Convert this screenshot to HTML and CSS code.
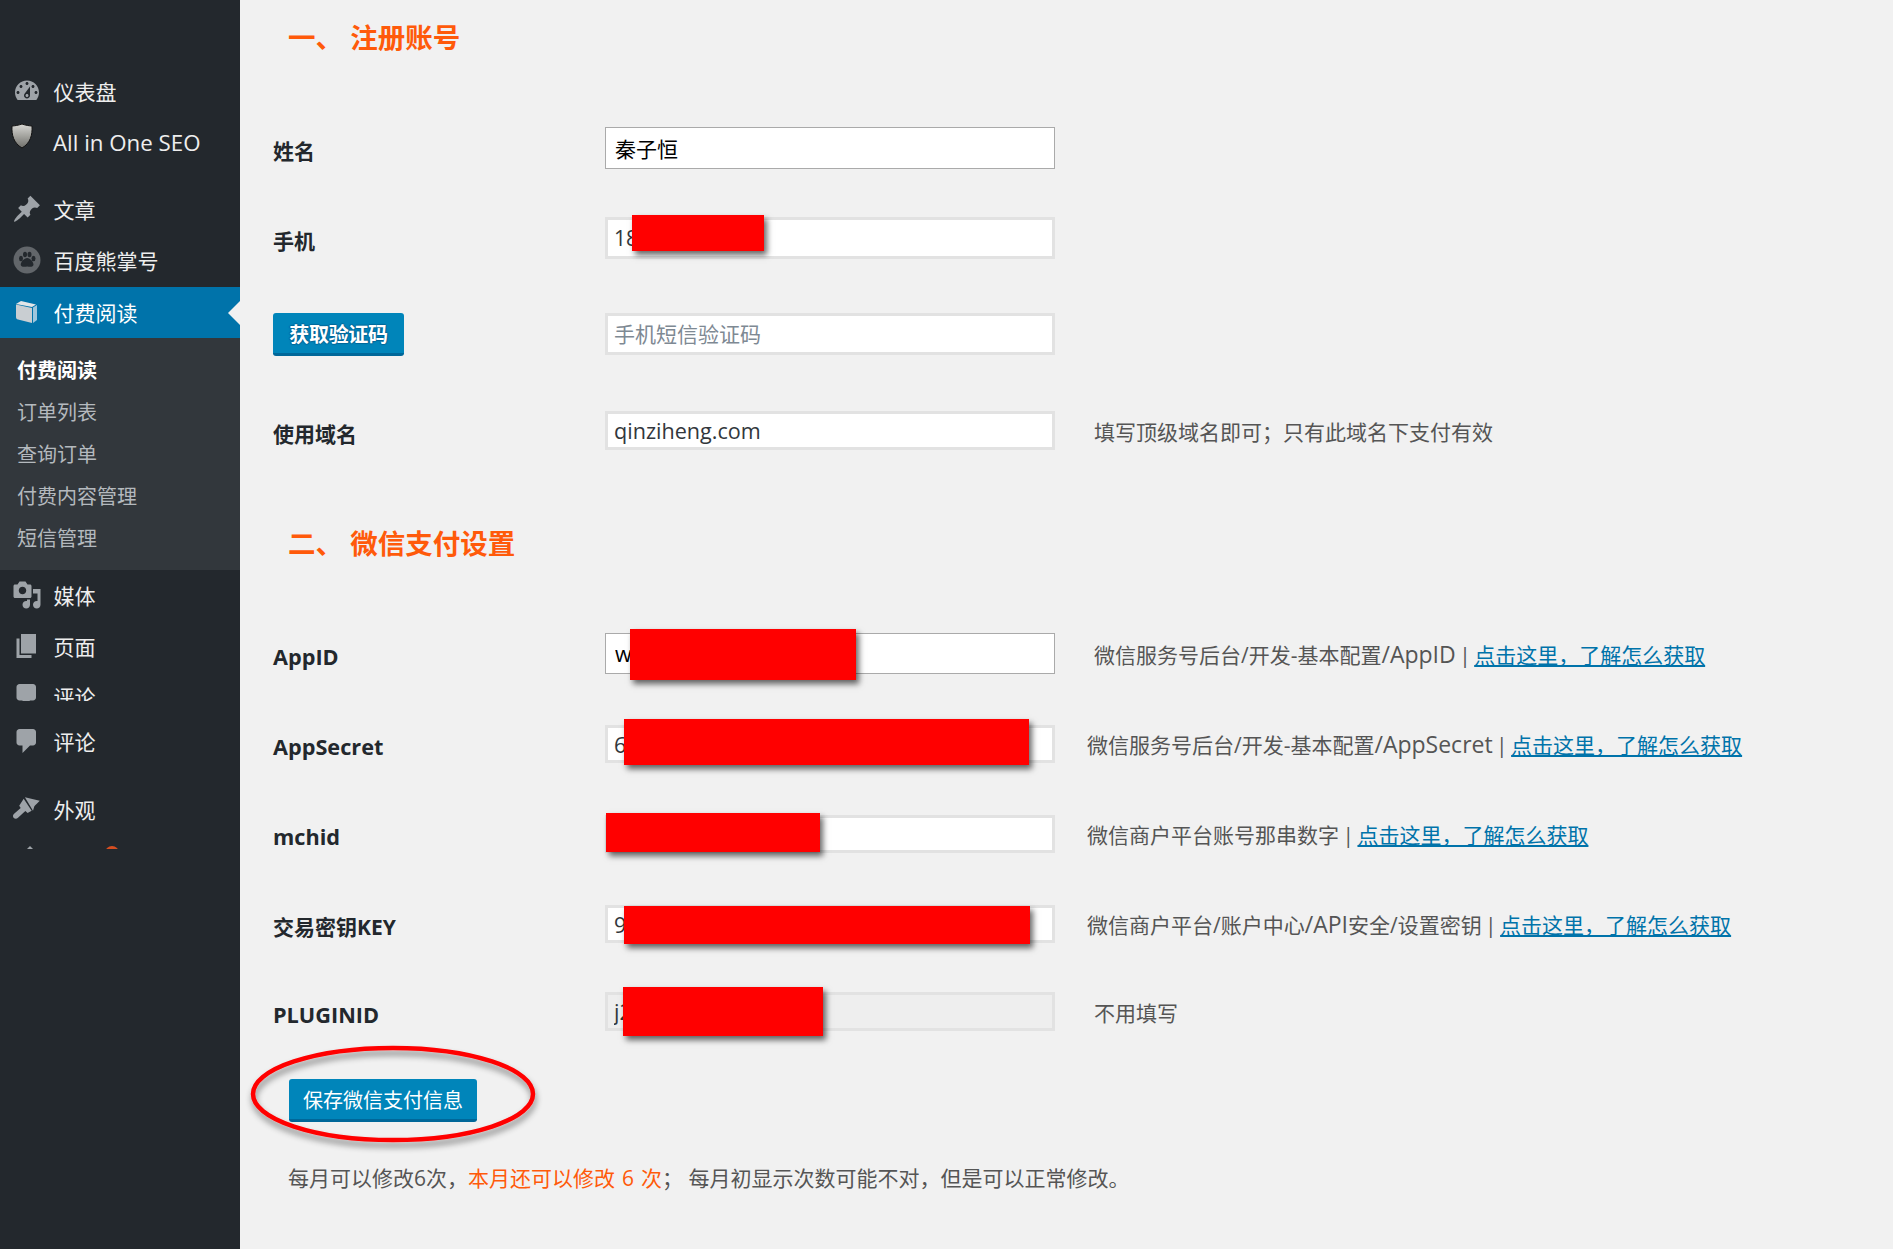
FILE: index.html
```html
<!DOCTYPE html>
<html lang="zh-CN">
<head>
<meta charset="utf-8">
<title>付费阅读</title>
<link rel="stylesheet" href="styles.css">
</head>
<body>
<div class="layout">
  <nav class="sidebar">
    <div class="menu-item">
      <svg class="icon" viewBox="0 0 20 20"><path d="M3.76 16h12.48c1.1-1.37 1.76-3.11 1.76-5 0-4.42-3.58-8-8-8s-8 3.58-8 8c0 1.89.66 3.63 1.76 5zM10 4c.55 0 1 .45 1 1s-.45 1-1 1-1-.45-1-1 .45-1 1-1zM6 6c.55 0 1 .45 1 1s-.45 1-1 1-1-.45-1-1 .45-1 1-1zm8 0c.55 0 1 .45 1 1s-.45 1-1 1-1-.45-1-1 .45-1 1-1zm-5.37 5.55L12 7v6c0 1.1-.9 2-2 2s-2-.9-2-2c0-.57.24-1.08.63-1.45zM4 10c.55 0 1 .45 1 1s-.45 1-1 1-1-.45-1-1 .45-1 1-1zm12 0c.55 0 1 .45 1 1s-.45 1-1 1-1-.45-1-1 .45-1 1-1zm-5 3c0-.55-.45-1-1-1s-1 .45-1 1 .45 1 1 1 1-.45 1-1z"/></svg>
      <span>仪表盘</span>
    </div>
    <div class="menu-item">
      <svg class="icon icon-shield" viewBox="0 0 24 26"><defs><linearGradient id="sh" x1="0" y1="0" x2="0" y2="1"><stop offset="0" stop-color="#d8d8d4"/><stop offset="1" stop-color="#6f6f6a"/></linearGradient></defs><path d="M12 1C8 2.400 5 2.800 2 3c-.5 9 1.500 17 10 22 8.500-5 10.500-13 10-22-3-.2-6-.6-10-2z" fill="url(#sh)" stroke="#111" stroke-width="1"/></svg>
      <span class="menu-latin">All in One SEO</span>
    </div>
    <div class="menu-sep"></div>
    <div class="menu-item">
      <svg class="icon" viewBox="0 0 20 20"><path d="M10.44 3.020l1.820-1.820 6.360 6.350-1.830 1.820c-1.050-.68-2.480-.57-3.410.36l-.75.75c-.92.93-1.040 2.350-.35 3.410l-1.830 1.820-2.410-2.410-2.800 2.790c-.42.42-3.380 2.710-3.800 2.290s1.860-3.390 2.280-3.810l2.790-2.790L4.100 9.360l1.830-1.820c1.050.69 2.480.57 3.400-.36l.75-.75c.93-.92 1.050-2.350.36-3.410z"/></svg>
      <span>文章</span>
    </div>
    <div class="menu-item">
      <svg class="icon" viewBox="0 0 30 30"><circle cx="15" cy="15" r="13.500" fill="#62666a"/><g fill="#23282d"><ellipse cx="9" cy="13.500" rx="2" ry="2.700"/><ellipse cx="13" cy="9.500" rx="2" ry="2.800"/><ellipse cx="17.500" cy="9.500" rx="2" ry="2.800"/><ellipse cx="21.500" cy="13.500" rx="2" ry="2.700"/><path d="M15.200 13c3 0 6.300 4 6.300 6.500 0 2.500-2.500 2.600-6.300 2.100-3.800.5-6.500.4-6.500-2.100 0-2.500 3.500-6.500 6.500-6.500z"/></g></svg>
      <span>百度熊掌号</span>
    </div>
    <div class="menu-item menu-item-active">
      <svg class="icon icon-book" viewBox="0 0 30 30"><path d="M4 7l5-3 15 3.500-4 2.500z" fill="#e3e6e8"/><path d="M4 7.500l16 3.500v15L6 22.500c-1.200-.3-2-1-2-2.500z" fill="#c9ced2"/><path d="M21 10.500l4-2.500v15l-4 3z" fill="#9fc6dc"/></svg>
      <span>付费阅读</span>
      <i class="active-arrow"></i>
    </div>
    <ul class="submenu">
      <li class="submenu-current">付费阅读</li>
      <li>订单列表</li>
      <li>查询订单</li>
      <li>付费内容管理</li>
      <li>短信管理</li>
    </ul>
    <div class="menu-item menu-item-media">
      <svg class="icon" viewBox="0 0 20 20"><path d="M13 11V4c0-.55-.45-1-1-1h-1.670L9 1H5L3.670 3H2c-.55 0-1 .45-1 1v7c0 .55.45 1 1 1h10c.55 0 1-.45 1-1zM7 4.500c1.380 0 2.500 1.120 2.500 2.500S8.380 9.500 7 9.500 4.500 8.380 4.500 7 5.620 4.500 7 4.500zM14 6h5v10.500c0 1.380-1.120 2.500-2.500 2.500S14 17.880 14 16.500s1.120-2.500 2.500-2.500c.17 0 .34.020.5.050V9h-3V6zm-4 8.050V13h2v3.500c0 1.380-1.120 2.500-2.500 2.500S7 17.880 7 16.500 8.120 14 9.500 14c.17 0 .34.020.5.050z"/></svg>
      <span>媒体</span>
    </div>
    <div class="menu-item">
      <svg class="icon" viewBox="0 0 20 20"><path d="M6 15V2h10v13H6zm-1 1h8v2H3V5h2v11z"/></svg>
      <span>页面</span>
    </div>
    <div class="menu-clip">
      <div class="menu-item">
        <svg class="icon" viewBox="0 0 20 20"><path d="M5 2h9c1.100 0 2 .9 2 2v7c0 1.100-.9 2-2 2h-2l-5 5v-5H5c-1.100 0-2-.9-2-2V4c0-1.100.9-2 2-2z"/></svg>
        <span>评论</span>
      </div>
    </div>
    <div class="menu-item menu-item-comments">
      <svg class="icon" viewBox="0 0 20 20"><path d="M5 2h9c1.100 0 2 .9 2 2v7c0 1.100-.9 2-2 2h-2l-5 5v-5H5c-1.100 0-2-.9-2-2V4c0-1.100.9-2 2-2z"/></svg>
      <span>评论</span>
    </div>
    <div class="menu-item menu-item-appearance">
      <svg class="icon" viewBox="0 0 20 20"><path d="M8.600 2.200l9.900 2.300c-1.300 1.600-2.700 2.400-3.600 3.700l-.9 2.900z"/><path d="M7.800 3.200l5.300 7.900-2.700 1.600-1.500-1.300L4 15.800c-.8.8-2 .9-2.800.2-.8-.9-.7-2.100.2-2.900l4.400-3.700-1-1.500z"/></svg>
      <span>外观</span>
    </div>
    <div class="menu-fragment"><i class="fragment-tip"></i><i class="fragment-badge"></i></div>
  </nav>

  <main class="content">
    <h2 class="section-title section-title-first">一、 注册账号</h2>

    <div class="form-row row-name">
      <label class="field-label">姓名</label>
      <div class="field"><input class="input input-strong input-h42 input-dark" value="秦子恒"></div>
    </div>
    <div class="form-row row-phone">
      <label class="field-label">手机</label>
      <div class="field"><input class="input input-h42" value="18"><div class="redact redact-phone"></div></div>
    </div>
    <div class="form-row row-code">
      <div class="field-label"><button class="btn btn-code" type="button">获取验证码</button></div>
      <div class="field"><input class="input input-h42" placeholder="手机短信验证码"></div>
    </div>
    <div class="form-row row-domain">
      <label class="field-label">使用域名</label>
      <div class="field"><input class="input input-h39 input-latin" value="qinziheng.com"></div>
      <p class="hint">填写顶级域名即可；只有此域名下支付有效</p>
    </div>

    <h2 class="section-title section-title-second">二、 微信支付设置</h2>

    <div class="form-row row-appid">
      <label class="field-label field-label-latin">AppID</label>
      <div class="field"><input class="input input-strong input-h41 input-dark input-latin" value="w"><div class="redact redact-appid"></div></div>
      <p class="hint">微信服务号后台/开发-基本配置<span class="hint-latin">/AppID</span><span class="hint-sep"> | </span><a href="#">点击这里，了解怎么获取</a></p>
    </div>
    <div class="form-row row-secret">
      <label class="field-label field-label-latin">AppSecret</label>
      <div class="field"><input class="input input-h38 input-latin" value="6"><div class="redact redact-secret"></div></div>
      <p class="hint hint-near">微信服务号后台/开发-基本配置<span class="hint-latin">/AppSecret</span><span class="hint-sep"> | </span><a href="#">点击这里，了解怎么获取</a></p>
    </div>
    <div class="form-row row-mchid">
      <label class="field-label field-label-latin">mchid</label>
      <div class="field"><input class="input input-h38"><div class="redact redact-mchid"></div></div>
      <p class="hint hint-near">微信商户平台账号那串数字<span class="hint-sep"> | </span><a href="#">点击这里，了解怎么获取</a></p>
    </div>
    <div class="form-row row-key">
      <label class="field-label">交易密钥KEY</label>
      <div class="field"><input class="input input-h38 input-latin" value="9"><div class="redact redact-key"></div></div>
      <p class="hint hint-near">微信商户平台/账户中心<span class="hint-latin">/API</span>安全/设置密钥<span class="hint-sep"> | </span><a href="#">点击这里，了解怎么获取</a></p>
    </div>
    <div class="form-row row-plugin">
      <label class="field-label field-label-latin">PLUGINID</label>
      <div class="field"><input class="input input-h39 input-readonly input-latin" value="j2" readonly><div class="redact redact-plugin"></div></div>
      <p class="hint">不用填写</p>
    </div>

    <div class="save-row">
      <button class="btn btn-save" type="button">保存微信支付信息</button>
      <svg class="circle-mark" viewBox="0 0 300 115"><defs><filter id="ds" x="-10%" y="-15%" width="120%" height="135%"><feDropShadow dx="1" dy="5" stdDeviation="3" flood-color="#000" flood-opacity=".45"/></filter></defs><ellipse cx="150" cy="55" rx="140" ry="46" fill="none" stroke="#f00" stroke-width="4.500" filter="url(#ds)"/></svg>
    </div>

    <p class="note">每月可以修改6次，<span class="note-accent">本月还可以修改 6 次</span>； 每月初显示次数可能不对，但是可以正常修改。</p>
  </main>
</div>
</body>
</html>
```
FILE: styles.css
```css
* { box-sizing: border-box; }
html, body { margin: 0; height: 100%; overflow: hidden; }
body {
  background: #f1f1f1;
  color: #32373c;
  font-family: "Open Sans", "Noto Sans CJK SC", sans-serif;
  font-size: 21px;
}
.layout { display: flex; height: 1249px; }

/* Sidebar */
.sidebar {
  flex: 0 0 240px;
  background: #23282d;
  color: #eee;
  padding-top: 67px;
}
.menu-item {
  position: relative;
  display: flex;
  align-items: center;
  height: 51px;
  padding: 0 0 3px 12px;
  font-size: 21px;
}
.menu-item span { margin-left: 11.500px; }
.menu-item .menu-latin { font-size: 22.300px; margin-left: 12px; }
.icon { flex: 0 0 30px; width: 30px; height: 30px; fill: #9ea3a8; }
.icon-shield { flex-basis: 24px; width: 24px; height: 26px; margin: -13px 7px 0 -2px; }
.icon-book { fill: none; }
.menu-sep { height: 16px; }
.menu-item-active { background: #0073aa; color: #fff; padding-bottom: 1px; }
.active-arrow {
  position: absolute;
  right: 0;
  top: 50%;
  margin-top: -12px;
  border: 12px solid transparent;
  border-right-color: #f1f1f1;
  border-left: 0;
}
.submenu {
  list-style: none;
  margin: 0;
  padding: 12px 0;
  height: 232px;
  background: #32373c;
  color: #b4b9be;
  font-size: 20px;
}
.submenu li { height: 42px; line-height: 42px; padding-left: 17px; }
.submenu-current { color: #fff; font-weight: 700; }
.menu-item-media { margin-top: 1px; }
.menu-clip { height: 29px; overflow: hidden; margin-top: -1px; }
.menu-item-comments { margin-top: 16px; }
.menu-item-appearance { margin-top: 17px; }
.menu-fragment { position: relative; height: 3px; margin-top: 10px; overflow: hidden; }
.fragment-tip {
  position: absolute;
  left: 26px;
  top: 0;
  border: 4px solid transparent;
  border-top: 0;
  border-bottom-color: #9ea3a8;
}
.fragment-badge {
  position: absolute;
  left: 105px;
  top: 0;
  width: 14px;
  height: 14px;
  border-radius: 50%;
  background: #d54e21;
}

/* Content */
.content { flex: 1; padding-left: 33px; }
.section-title {
  margin: 0 0 0 15px;
  color: #ff5a0a;
  font-size: 27.500px;
  font-weight: 700;
  line-height: 40px;
}
.section-title-first { margin-top: 18px; }
.section-title-second { margin-top: 74px; }
.form-row { display: flex; align-items: center; }
.row-name { margin-top: 69px; }
.row-phone { margin-top: 48px; }
.row-code { margin-top: 52px; }
.row-domain { margin-top: 55px; }
.row-appid { margin-top: 69px; }
.row-secret { margin-top: 51px; }
.row-mchid { margin-top: 52px; }
.row-key { margin-top: 52px; }
.row-plugin { margin-top: 49px; }
.field-label {
  flex: 0 0 332px;
  padding-top: 4px;
  font-size: 21px;
  font-weight: 700;
  color: #23282d;
}
.field-label-latin { font-size: 21.700px; padding-top: 5px; }
.row-code .field-label { padding-top: 2px; }
.field { position: relative; flex: 0 0 450px; }
.input {
  display: block;
  width: 450px;
  padding: 0 6px;
  border: 3px solid #e2e2e2;
  background: #fff;
  color: #32373c;
  font: inherit;
  outline: 0;
}
.input::placeholder { color: #7e8993; opacity: 1; }
.input-strong { border: 1px solid #aaa; padding: 0 9px; }
.input-dark { color: #000; }
.input-latin { font-size: 21.600px; }
.input-h42 { height: 42px; }
.input-h41 { height: 41px; }
.input-h39 { height: 39px; }
.input-h38 { height: 38px; }
.input-readonly { background: #eee; }
.hint { margin: 0 0 0 39px; color: #555; white-space: nowrap; }
.hint-near { margin-left: 32px; }
.hint-latin { font-size: 23px; }
.hint-sep { margin: 0 -2px; }
.hint a { color: #0073aa; }

.redact { position: absolute; background: #f00; box-shadow: 3px 4px 6px rgba(0,0,0,.6); }
.redact-phone { left: 27px; top: -2px; width: 132px; height: 36px; }
.redact-appid { left: 25px; top: -4px; width: 226px; height: 51px; }
.redact-secret { left: 19px; top: -6px; width: 405px; height: 46px; }
.redact-mchid { left: 1px; top: -2px; width: 214px; height: 39px; }
.redact-key { left: 19px; top: 1px; width: 406px; height: 38px; }
.redact-plugin { left: 18px; top: -5px; width: 200px; height: 49px; }

.btn {
  border: 0;
  border-bottom: 3px solid #006799;
  border-radius: 3px;
  background: #0085ba;
  color: #fff;
  font: inherit;
  font-size: 20px;
  padding: 0;
  white-space: nowrap;
}
.btn-code {
  display: block;
  width: 131px;
  height: 43px;
  font-weight: 700;
  letter-spacing: -.3px;
  text-shadow: 0 -1px 1px #006799, 1px 0 1px #006799, 0 1px 1px #006799, -1px 0 1px #006799;
}
.save-row { position: relative; margin: 48px 0 0 16px; }
.btn-save { display: block; width: 188px; height: 43px; }
.circle-mark { position: absolute; left: -46px; top: -40px; width: 300px; height: 115px; }
.note { margin: 41px 0 0 15px; color: #555; white-space: nowrap; line-height: 30px; }
.note-accent { color: #ff5a0a; word-spacing: 1.500px; }
```
